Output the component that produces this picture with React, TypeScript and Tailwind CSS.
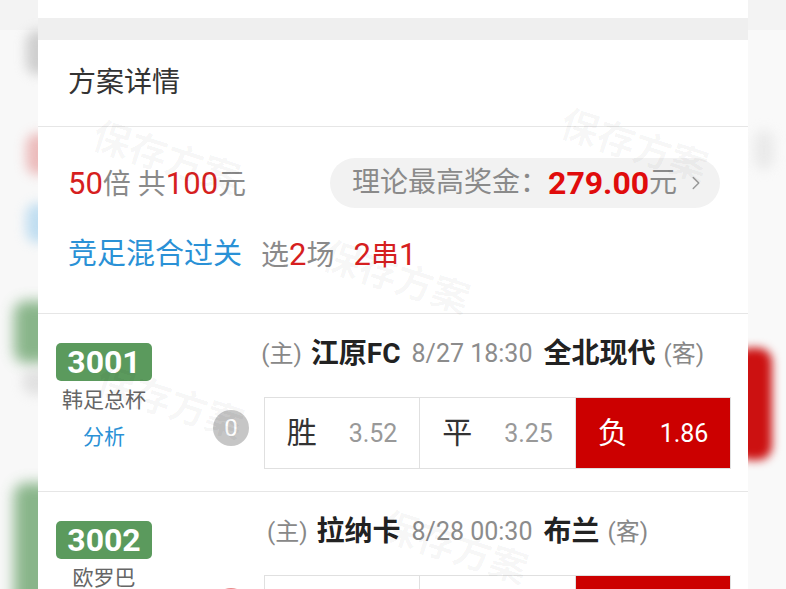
import { ChevronRight } from 'lucide-react';

// Single odds cell inside the 胜/平/负 box
interface OddsCellProps {
  label: string;
  odds: string;
  picked?: boolean;
}

const OddsCell = ({ label, odds, picked = false }: OddsCellProps) => {
  return (
    <div
      className={`flex items-center justify-center gap-[32px] ${
        picked ? 'bg-[#cc0000] text-white' : 'bg-white'
      }`}
    >
      <span className={`text-[30px] leading-none ${picked ? 'text-white' : 'text-[#333]'}`}>{label}</span>
      <span className={`text-[25px] leading-none ${picked ? 'text-white' : 'text-[#999]'}`}>{odds}</span>
    </div>
  );
};

interface MatchProps {
  code: string;
  league: string;
  home: string;
  away: string;
  time: string;
  odds: { label: string; odds: string; picked?: boolean }[];
  count: string;
  countColor: string;
  showAnalysis?: boolean;
}

const MatchRow = ({ code, league, home, away, time, odds, count, countColor, showAnalysis = true }: MatchProps) => {
  return (
    <div className="h-[178px] border-b border-[#e6e6e6] flex shrink-0">
      <div className="w-[96px] ml-[18px] pt-[29px] flex flex-col items-center">
        <div className="w-[96px] h-[38px] rounded-[5px] bg-[#5b9a5d] flex items-center justify-center">
          <span className="text-white text-[32px] font-bold leading-none">{code}</span>
        </div>
        <div className="mt-[7px] text-[21px] leading-[24px] text-[#666]">{league}</div>
        {showAnalysis && <div className="mt-[13px] text-[21px] leading-[24px] text-[#2a91d6]">分析</div>}
      </div>

      <div className="ml-[61px] w-[518px] flex flex-col">
        <div className="mt-[26px] h-[28px] flex items-center whitespace-nowrap">
          <div className="flex-1 flex items-center justify-end gap-[9px]">
            <span className="text-[24px] text-[#888]">(主)</span>
            <span className="text-[28px] font-bold text-[#222]">{home}</span>
          </div>
          <span className="px-[11px] text-[25px] text-[#8c8c8c]">{time}</span>
          <div className="flex-1 flex items-center justify-start gap-[8px]">
            <span className="text-[28px] font-bold text-[#222]">{away}</span>
            <span className="text-[24px] text-[#888]">(客)</span>
          </div>
        </div>

        <div className="mt-[29px] flex items-center">
          <div
            className={`w-[36px] h-[36px] mb-[10px] rounded-full flex items-center justify-center text-white text-[24px] shrink-0 ${countColor}`}
          >
            {count}
          </div>
          <div className="ml-[15px] w-[467px] h-[72px] border border-[#e0e0e0] grid grid-cols-[155px_156px_154px] divide-x divide-[#e0e0e0]">
            {odds.map((o, i) => (
              <OddsCell key={i} label={o.label} odds={o.odds} picked={o.picked} />
            ))}
          </div>
        </div>
      </div>
    </div>
  );
};

const SideStrip = ({ side }: { side: 'left' | 'right' }) => {
  if (side === 'left') {
    return (
      <div className="w-[38px] h-full bg-[#f8f8f8] flex flex-col overflow-hidden shrink-0">
        <div className="h-[30px] bg-[#f3f3f3] shrink-0" />
        <div className="ml-[26px] w-[24px] h-[45px] rounded-full bg-[#bdbdbd] blur-[6px] opacity-70 shrink-0" />
        <div className="ml-[26px] mt-[58px] w-[24px] h-[42px] rounded-full bg-[#e7a2a2] blur-[6px] opacity-70 shrink-0" />
        <div className="ml-[26px] mt-[28px] w-[24px] h-[40px] rounded-full bg-[#a9d3ee] blur-[6px] opacity-70 shrink-0" />
        <div className="ml-[14px] mt-[58px] w-[40px] h-[62px] rounded-[12px] bg-[#6ea56f] blur-[7px] opacity-80 shrink-0" />
        <div className="ml-[22px] mt-[6px] w-[30px] h-[26px] rounded-full bg-[#d2d2d2] blur-[6px] opacity-60 shrink-0" />
        <div className="ml-[14px] mt-[88px] w-[40px] h-[130px] rounded-[12px] bg-[#6ea56f] blur-[7px] opacity-80 shrink-0" />
      </div>
    );
  }
  return (
    <div className="w-[38px] h-full bg-[#f9f9f9] flex flex-col overflow-hidden shrink-0">
      <div className="h-[30px] bg-[#f3f3f3] shrink-0" />
      <div className="ml-[6px] mt-[100px] w-[20px] h-[40px] rounded-full bg-[#e4e4e4] blur-[6px] opacity-70 shrink-0" />
      <div className="-ml-[12px] mt-[178px] w-[36px] h-[112px] rounded-[14px] bg-[#cc1111] blur-[5px] shrink-0" />
    </div>
  );
};

const Watermark = ({ className }: { className: string }) => (
  <div
    className={`absolute pointer-events-none select-none text-[38px] font-bold text-black/[0.035] rotate-[18deg] whitespace-nowrap ${className}`}
  >
    保存方案
  </div>
);

export default function App() {
  const matches: MatchProps[] = [
    {
      code: '3001',
      league: '韩足总杯',
      home: '江原FC',
      away: '全北现代',
      time: '8/27 18:30',
      count: '0',
      countColor: 'bg-[#c6c6c6]',
      odds: [
        { label: '胜', odds: '3.52' },
        { label: '平', odds: '3.25' },
        { label: '负', odds: '1.86', picked: true },
      ],
    },
    {
      code: '3002',
      league: '欧罗巴',
      home: '拉纳卡',
      away: '布兰',
      time: '8/28 00:30',
      count: '1',
      countColor: 'bg-[#e88a8a]',
      odds: [
        { label: '胜', odds: '1.50' },
        { label: '平', odds: '4.10' },
        { label: '负', odds: '5.20', picked: true },
      ],
    },
  ];

  return (
    <div className="w-[786px] h-[589px] overflow-hidden flex bg-white font-['Roboto','Noto_Sans_CJK_SC',sans-serif]">
      <SideStrip side="left" />

      <div className="relative w-[710px] h-full flex flex-col shrink-0 bg-white">
        <div className="h-[18px] bg-white shrink-0" />
        <div className="h-[22px] bg-[#efefef] shrink-0" />

        <div className="h-[87px] border-b border-[#e6e6e6] flex items-center pl-[30px] shrink-0">
          <h2 className="text-[28px] text-[#333] leading-none">方案详情</h2>
        </div>

        <div className="h-[187px] border-b border-[#e6e6e6] pt-[31px] shrink-0">
          <div className="h-[50px] flex items-center justify-between pl-[30px] pr-[28px] whitespace-nowrap">
            <div className="text-[28px] text-[#8a8a8a] leading-none">
              <span className="text-[31px] text-[#d61f1f]">50</span>倍 共<span className="text-[31px] text-[#d61f1f]">100</span>元
            </div>
            <div className="h-[50px] w-[390px] shrink-0 rounded-full bg-[#f2f2f2] flex items-center pl-[22px] pr-[12px]">
              <span className="text-[28px] text-[#8a8a8a] leading-none shrink-0">理论最高奖金：</span>
              <span className="text-[32px] font-bold text-[#e00c0c] leading-none shrink-0">279.00</span>
              <span className="text-[28px] text-[#8a8a8a] leading-none shrink-0">元</span>
              <ChevronRight className="ml-[8px] w-[22px] h-[22px] text-[#999] shrink-0" strokeWidth={1.6} />
            </div>
          </div>
          <div className="mt-[32px] h-[28px] flex items-center pl-[30px] text-[28px] leading-none whitespace-nowrap">
            <span className="text-[29px] text-[#2a91d6]">竞足混合过关</span>
            <span className="ml-[19px] text-[#8a8a8a]">
              选<span className="text-[31px] text-[#d61f1f]">2</span>场
            </span>
            <span className="ml-[19px] text-[31px] text-[#d61f1f]">
              2<span className="text-[28px]">串</span>1
            </span>
          </div>
        </div>

        {matches.map((m) => (
          <MatchRow key={m.code} {...m} />
        ))}

        <Watermark className="left-[52px] top-[130px]" />
        <Watermark className="left-[282px] top-[250px]" />
        <Watermark className="left-[520px] top-[118px]" />
        <Watermark className="left-[56px] top-[375px]" />
        <Watermark className="left-[340px] top-[520px]" />
      </div>

      <SideStrip side="right" />
    </div>
  );
}
